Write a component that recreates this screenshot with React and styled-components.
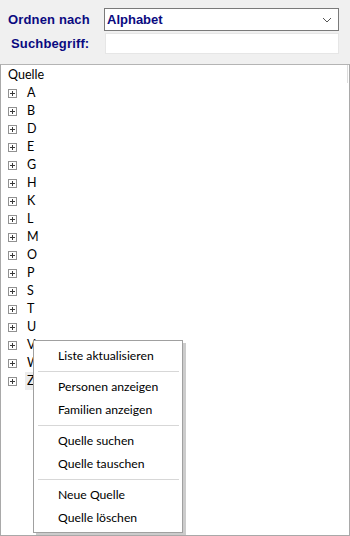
import React from "react";
import styled, { createGlobalStyle } from "styled-components";

const GlobalStyle = createGlobalStyle`
  html, body {
    margin: 0;
    padding: 0;
    background: #f0f0f0;
  }
  body {
    font-family: Lato, "Noto Sans", sans-serif;
    font-size: 12.5px;
    color: #000;
  }
`;

const Window = styled.div`
  width: 350px;
  height: 536px;
  display: flex;
  flex-direction: column;
  box-sizing: border-box;
  background: #f0f0f0;
`;

const Form = styled.div`
  display: grid;
  grid-template-columns: 104px 235px;
  grid-template-rows: 23px 22px;
  row-gap: 1px;
  padding: 8px 0 0 0;
  height: 56px;
  box-sizing: border-box;
`;

const Label = styled.label`
  font-family: "Liberation Sans", Arial, sans-serif;
  font-weight: bold;
  font-size: 13px;
  letter-spacing: 0.15px;
  color: #0a0a80;
  display: flex;
  align-items: center;
  padding-left: ${(p) => p.$indent}px;
`;

const Select = styled.div`
  box-sizing: border-box;
  border: 1px solid #7a7a7a;
  background: #fff;
  display: flex;
  align-items: center;
  justify-content: space-between;
  padding: 0 6px 0 2px;
  font-family: "Liberation Sans", Arial, sans-serif;
  font-weight: bold;
  font-size: 13px;
  color: #0a0a80;
`;

const Input = styled.div`
  box-sizing: border-box;
  margin: 1px 0 0 1px;
  border: 1px solid #e6e6e6;
  background: #fff;
`;

const TreePanel = styled.div`
  position: relative;
  flex: 1;
  margin-top: 8px;
  border: 1px solid #a9a9a9;
  border-top-color: #b4b4b4;
  background: #fff;
  box-sizing: border-box;
  overflow: hidden;
`;

const Scroll = styled.div`
  position: absolute;
  right: 1px;
  top: 0;
  width: 1px;
  height: 18px;
  background: #dcdcdc;
`;

const Tree = styled.ul`
  list-style: none;
  margin: 0;
  padding: 1px 0 0 0;
`;

const Row = styled.li`
  height: 18px;
  display: flex;
  align-items: center;
  padding-left: 7px;
  line-height: 18px;
`;

const Expander = styled.span`
  width: 9px;
  height: 9px;
  box-sizing: border-box;
  border: 1px solid #919191;
  position: relative;
  margin-right: 8px;
  background: #fff;
  &::before,
  &::after {
    content: "";
    position: absolute;
    background: #3a3a3a;
  }
  &::before {
    left: 1px;
    top: 3px;
    width: 5px;
    height: 1px;
  }
  &::after {
    left: 3px;
    top: 1px;
    width: 1px;
    height: 5px;
  }
`;

const NodeText = styled.span`
  padding: 0 2px;
  background: ${(p) => (p.$selected ? "#ececec" : "transparent")};
`;

const Menu = styled.div`
  position: absolute;
  left: 32px;
  top: 275px;
  width: 150px;
  box-sizing: border-box;
  background: #fff;
  border: 1px solid #a0a0a0;
  box-shadow: 3px 3px 0 rgba(0, 0, 0, 0.2);
  padding: 3px 0 3px 0;
  font-size: 12.2px;
`;

const MenuItem = styled.div`
  height: 23px;
  line-height: 23px;
  padding-left: 24px;
  white-space: nowrap;
`;

const Separator = styled.div`
  height: 8px;
  display: flex;
  align-items: center;
  padding: 0 3px 0 4px;
  &::after {
    content: "";
    flex: 1;
    height: 1px;
    background: #d7d7d7;
  }
`;

const letters = ["A", "B", "D", "E", "G", "H", "K", "L", "M", "O", "P", "S", "T", "U", "V", "W", "Z"];

const menuGroups = [
  ["Liste aktualisieren"],
  ["Personen anzeigen", "Familien anzeigen"],
  ["Quelle suchen", "Quelle tauschen"],
  ["Neue Quelle", "Quelle löschen"],
];

function Chevron() {
  return (
    <svg width="10" height="6" viewBox="0 0 10 6">
      <path d="M1 1 L5 5 L9 1" fill="none" stroke="#555" strokeWidth="1" />
    </svg>
  );
}

export default function App() {
  return (
    <Window>
      <GlobalStyle />
      <Form>
        <Label $indent={8}>Ordnen nach</Label>
        <Select>
          <span>Alphabet</span>
          <Chevron />
        </Select>
        <Label $indent={11}>Suchbegriff:</Label>
        <Input />
      </Form>
      <TreePanel>
        <Scroll />
        <Tree>
          <Row>Quelle</Row>
          {letters.map((l) => (
            <Row key={l}>
              <Expander />
              <NodeText $selected={l === "Z"}>{l}</NodeText>
            </Row>
          ))}
        </Tree>
        <Menu>
          {menuGroups.map((group, gi) => (
            <React.Fragment key={gi}>
              {gi > 0 && <Separator />}
              {group.map((item) => (
                <MenuItem key={item}>{item}</MenuItem>
              ))}
            </React.Fragment>
          ))}
        </Menu>
      </TreePanel>
    </Window>
  );
}
